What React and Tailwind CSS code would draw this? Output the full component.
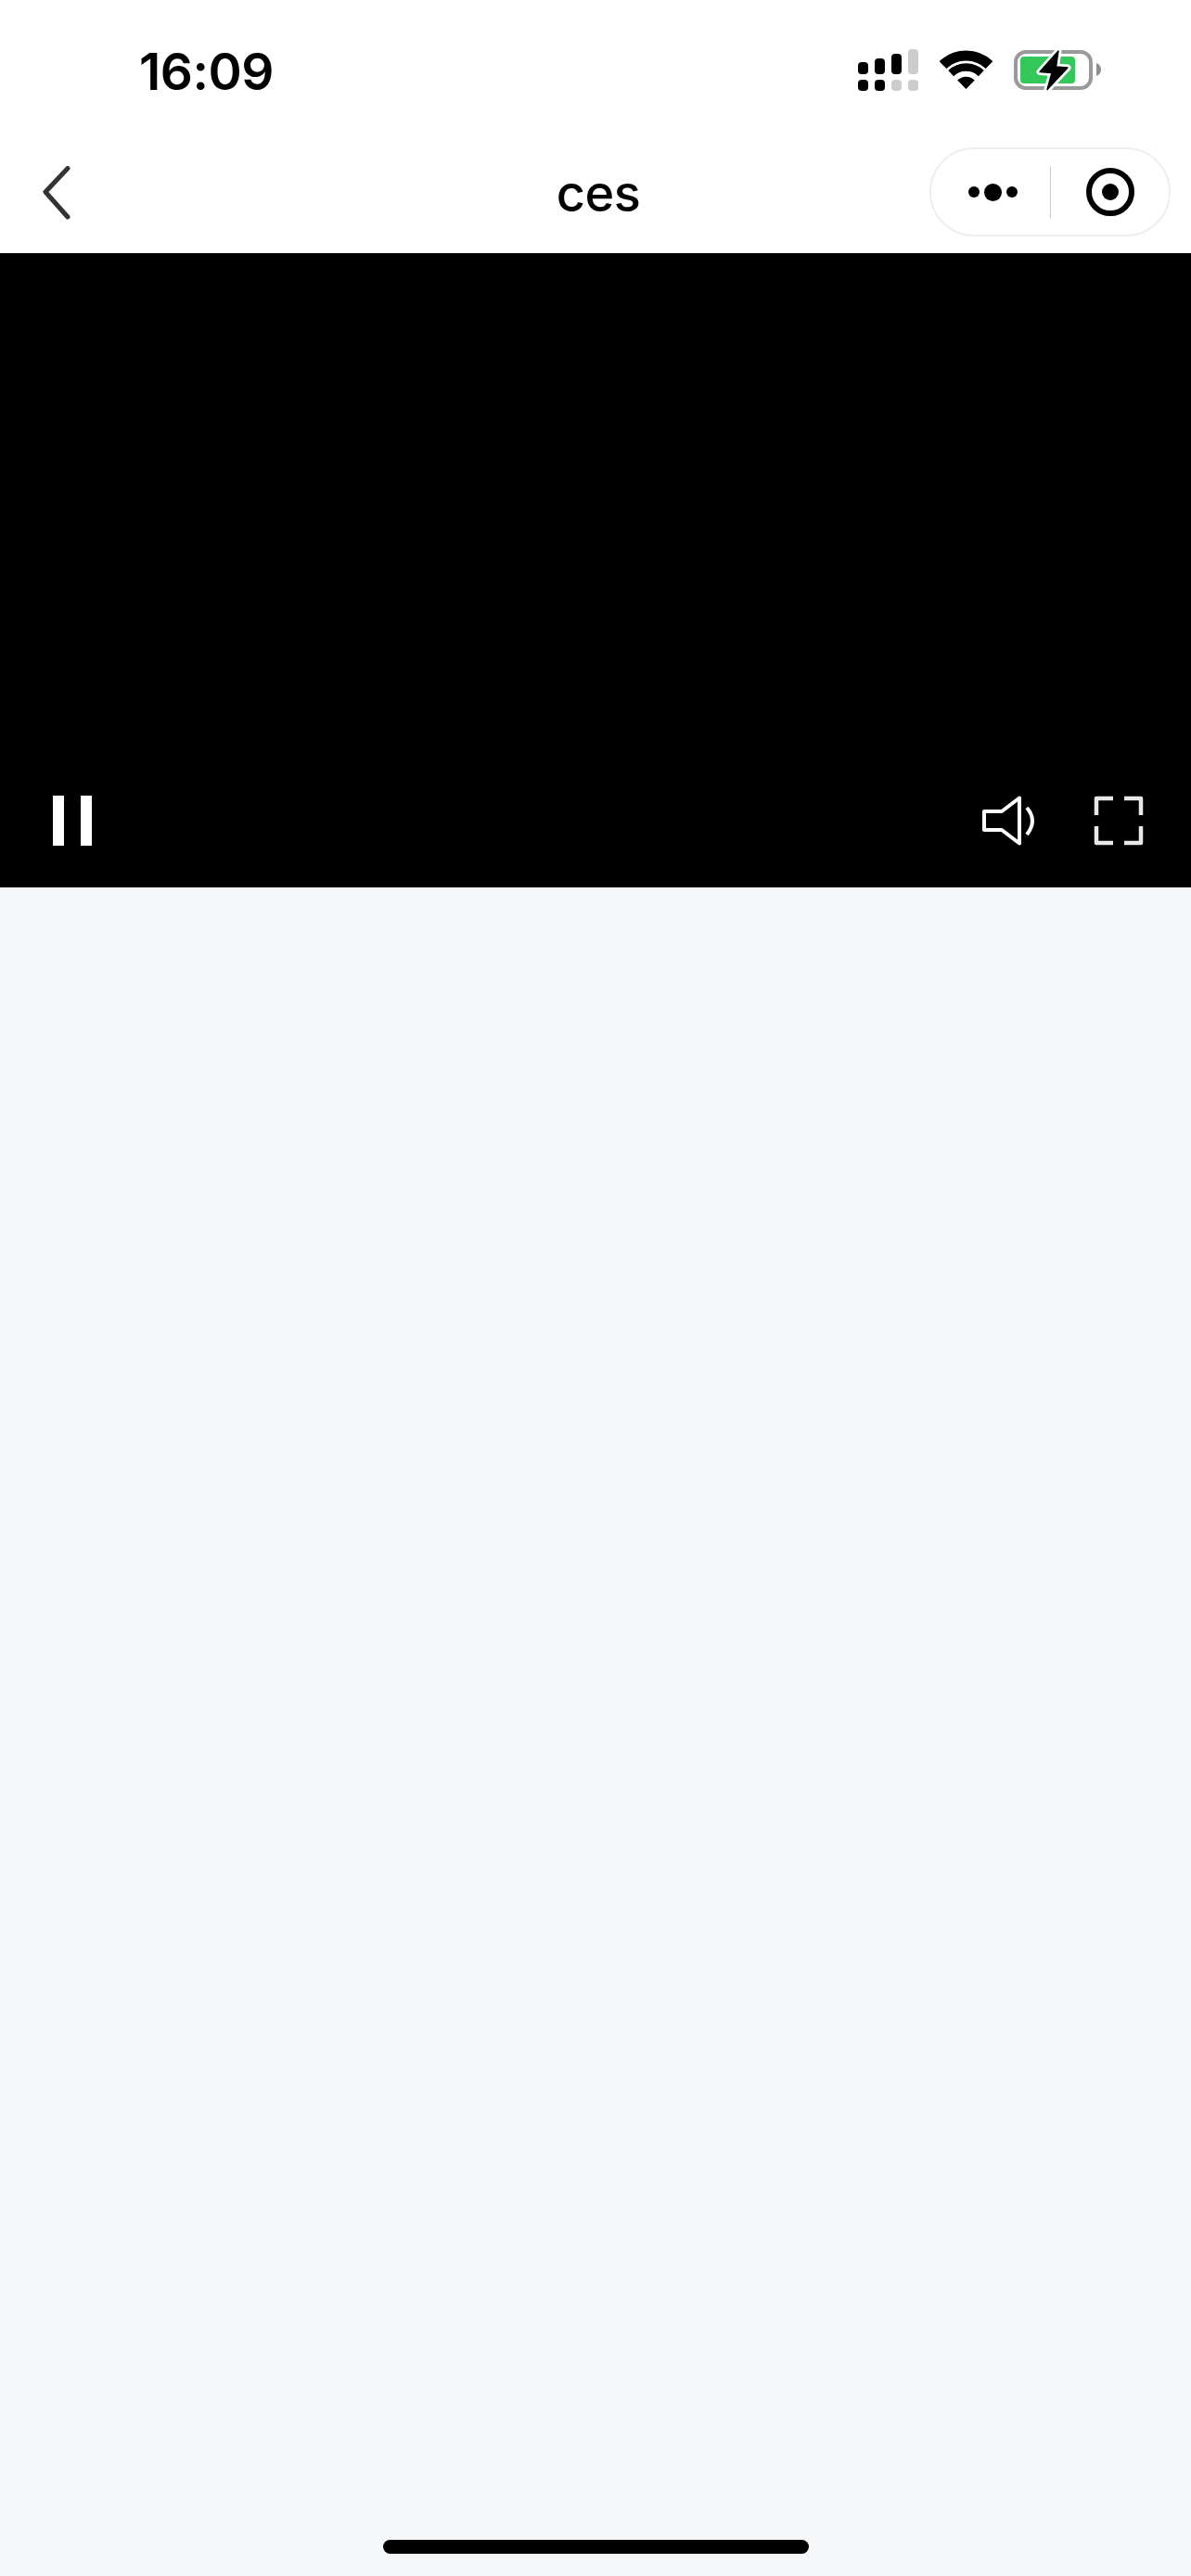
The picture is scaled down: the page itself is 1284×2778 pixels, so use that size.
export default function App() {
  return (
    <div className="flex h-[2778px] w-[1284px] flex-col overflow-hidden bg-[#f6f7f9] font-['Inter','Liberation_Sans',sans-serif] text-black">
      <div className="bg-white">
        <div className="flex h-[141px] items-start justify-between pl-[150px] pr-[97px] pt-[53px]">
          <span className="text-[55px] font-semibold leading-[48px] tracking-[-0.5px]">16:09</span>
          <div className="flex items-start">
            <svg width="65" height="45" viewBox="0 0 65 45" className="mr-[23px]">
              <g fill="#000">
                <rect x="0" y="14" width="11" height="13" rx="4" />
                <rect x="18" y="10" width="11" height="17" rx="4" />
                <rect x="36" y="5" width="11" height="22" rx="4" />
                <rect x="0" y="33" width="11" height="12" rx="4" />
                <rect x="18" y="33" width="11" height="12" rx="4" />
              </g>
              <g fill="#cccccc">
                <rect x="54" y="0" width="11" height="27" rx="4" />
                <rect x="36" y="33" width="11" height="12" rx="4" />
                <rect x="54" y="33" width="11" height="12" rx="4" />
              </g>
            </svg>
            <svg width="57" height="42" viewBox="0 0 57 42" className="mr-[23px] mt-[1px]">
              <path d="M3.5 16.1A36 36 0 0 1 53.5 16.1" fill="none" stroke="#000" strokeWidth="11" />
              <path d="M12.2 25.1A23.5 23.5 0 0 1 44.8 25.1" fill="none" stroke="#000" strokeWidth="8.5" />
              <path d="M28.5 42L19.2 32.6A13 13 0 0 1 37.8 32.6Z" fill="#000" />
            </svg>
            <svg width="94" height="44" viewBox="0 0 94 44" className="mt-[1px] overflow-visible">
              <rect x="2" y="2" width="81" height="39" rx="11" fill="none" stroke="#9a9a9a" strokeWidth="4" />
              <rect x="7" y="7" width="59" height="29" rx="4" fill="#34c759" />
              <path d="M89 14Q94 16 94 21Q94 26 89 28Z" fill="#8e8e8e" />
              <path
                d="M48 1L28 23.5L41 24.5L36 42.5L58 19L45.5 18Z"
                fill="#000"
                stroke="#fff"
                strokeWidth="7"
                strokeLinejoin="round"
                paintOrder="stroke"
              />
              <path d="M48 1L28 23.5L41 24.5L36 42.5L58 19L45.5 18Z" fill="#000" stroke="#000" strokeWidth="1.5" strokeLinejoin="round" />
            </svg>
          </div>
        </div>
        <div className="grid h-[132px] grid-cols-[1fr_auto_1fr] items-center">
          <div className="pl-[46px]">
            <svg width="30" height="58" viewBox="0 0 30 58" className="block translate-y-[1px]">
              <path d="M27 2.5L3 28L27 55" fill="none" stroke="#333333" strokeWidth="5" strokeLinecap="round" strokeLinejoin="round" />
            </svg>
          </div>
          <span className="translate-x-[3px] translate-y-[2px] text-[54px] font-medium leading-none tracking-[-0.5px]">ces</span>
          <div className="flex justify-end pr-[22px]">
            <div className="flex h-[96px] w-[260px] items-center rounded-full border-2 border-[#eeeeee] bg-white">
              <div className="flex w-[128px] items-center justify-center pl-[5px]">
                <span className="h-[12px] w-[12px] rounded-full bg-black" />
                <span className="ml-[5px] h-[19px] w-[19px] rounded-full bg-black" />
                <span className="ml-[5px] h-[12px] w-[12px] rounded-full bg-black" />
              </div>
              <div className="h-[56px] w-[1px] bg-[#cccccc]" />
              <div className="flex flex-1 justify-center pl-[1px]">
                <svg width="52" height="52" viewBox="0 0 52 52" className="block">
                  <circle cx="26" cy="26" r="23" fill="none" stroke="#000" strokeWidth="6" />
                  <circle cx="26" cy="26" r="9" fill="#000" />
                </svg>
              </div>
            </div>
          </div>
        </div>
      </div>
      <div className="flex h-[684px] items-end justify-between bg-black pb-[45px] pl-[57px] pr-[51px]">
        <div className="flex gap-[18px]">
          <span className="h-[54px] w-[12px] bg-white" />
          <span className="h-[54px] w-[12px] bg-white" />
        </div>
        <div className="flex items-center gap-[60px]">
          <svg width="60" height="54" viewBox="0 0 60 54" className="block">
            <path d="M2 17H21L40 2.5V51.5L21 37H2Z" fill="none" stroke="#fff" strokeWidth="4" strokeLinejoin="round" />
            <path d="M48 13Q60 27 48 42" fill="none" stroke="#fff" strokeWidth="4" />
          </svg>
          <svg width="54" height="54" viewBox="0 0 54 54" className="block">
            <g fill="none" stroke="#e8e8e8" strokeWidth="4.5" strokeLinejoin="round">
              <path d="M21 3H3V21" />
              <path d="M33 3H51V21" />
              <path d="M3 33V51H21" />
              <path d="M51 33V51H33" />
            </g>
          </svg>
        </div>
      </div>
      <div className="flex flex-1 flex-col items-center justify-end pb-[24px]">
        <div className="h-[15px] w-[459px] rounded-full bg-black" />
      </div>
    </div>
  );
}
